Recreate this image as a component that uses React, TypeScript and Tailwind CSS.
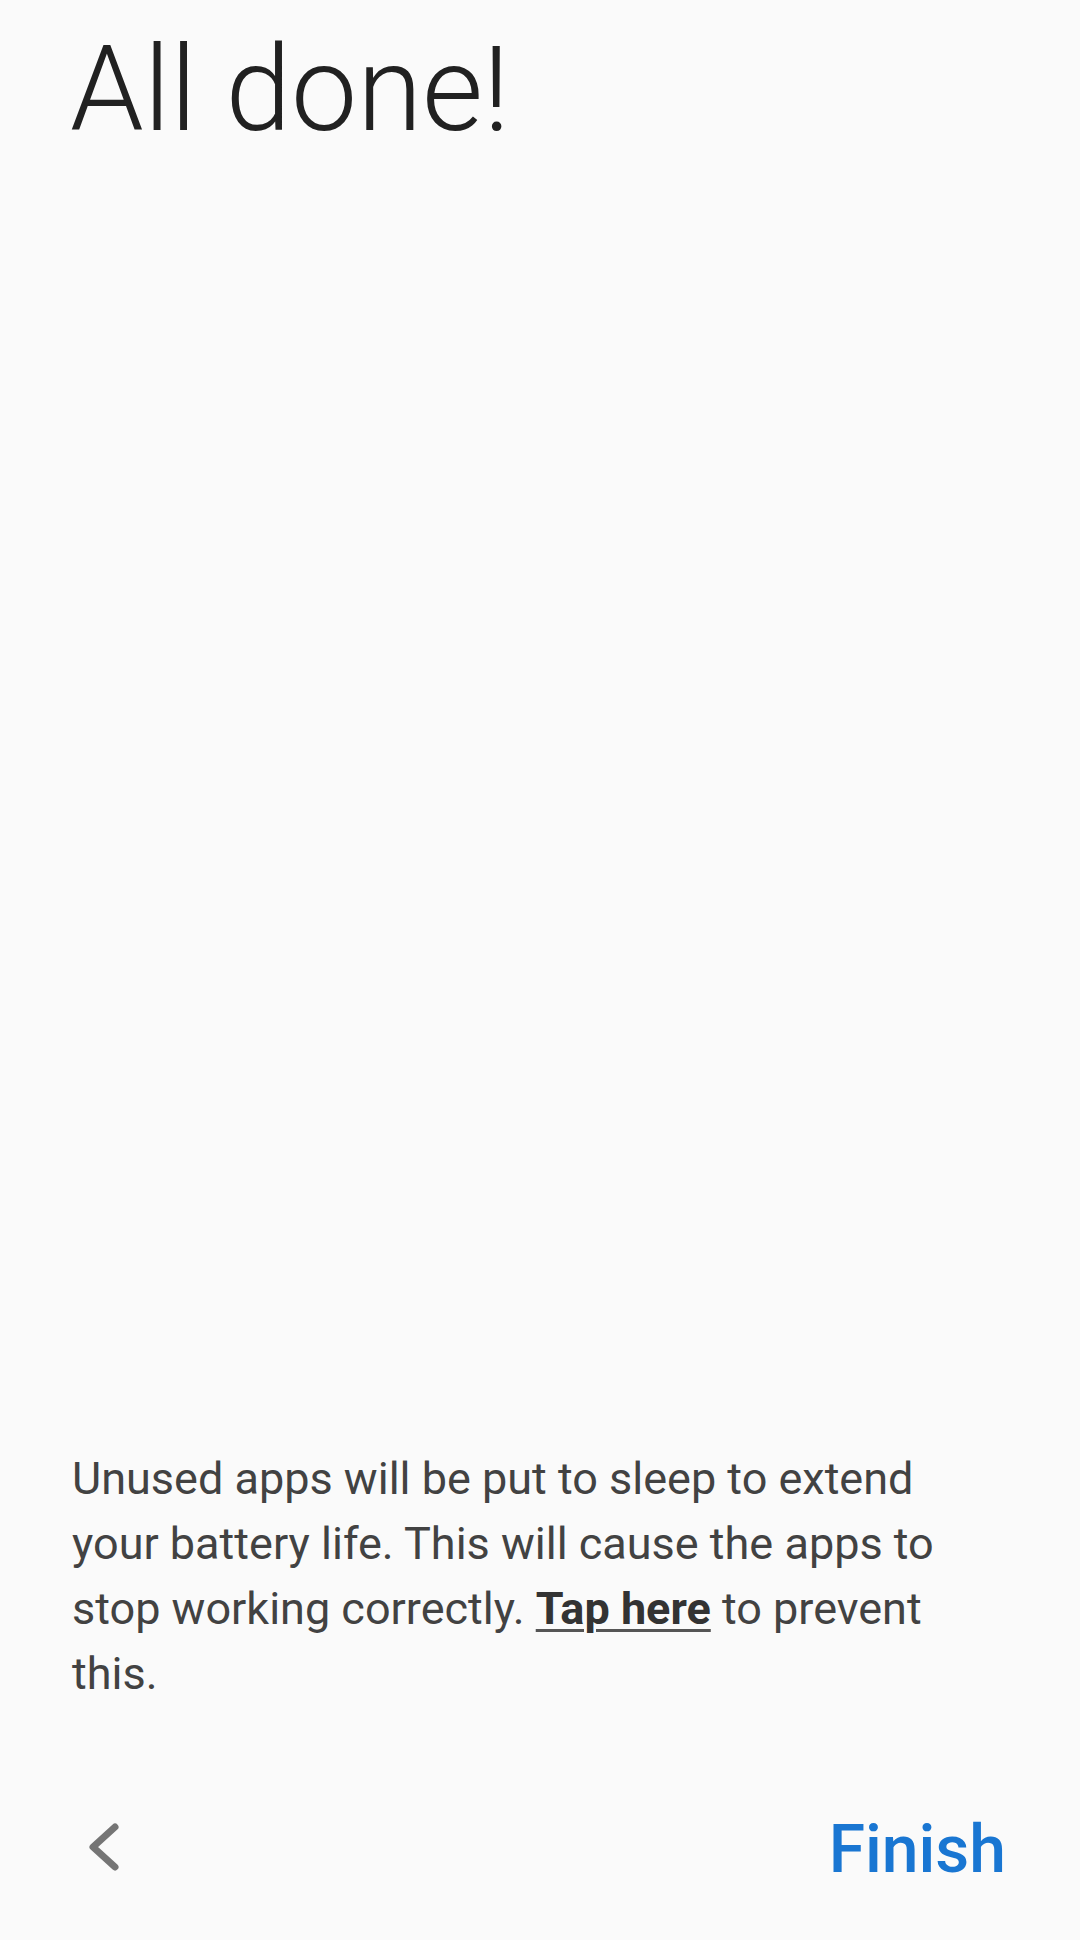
export default function App() {
  return (
    <div
      className="flex h-[1940px] w-[1080px] flex-col bg-[#fafafa]"
      style={{ fontFamily: 'Roboto, "Noto Sans", sans-serif' }}
    >
      <h1 className="pl-[70px] pt-[25px] text-[118px] font-light leading-[130px] text-[#212121]">
        All done!
      </h1>

      <div className="flex-1" />

      <p className="w-[972px] pl-[72px] text-[45px] leading-[65px] text-[#424242]">
        Unused apps will be put to sleep to extend your battery life. This will cause the apps to
        stop working correctly.{' '}
        <span className="font-bold text-[#333333] underline decoration-[#555555] decoration-[2.5px] underline-offset-[5px]">
          Tap here
        </span>{' '}
        to prevent this.
      </p>

      <div className="flex items-center justify-between pb-[57px] pl-[84px] pr-[74px] pt-[111px]">
        <button className="flex h-[66px] w-[40px] items-start">
          <svg width="40" height="66" viewBox="0 0 40 66" fill="none">
            <path
              d="M31 10 L9 30 L31 50"
              stroke="#757575"
              strokeWidth="7"
              strokeLinecap="round"
              strokeLinejoin="round"
            />
          </svg>
        </button>
        <button className="h-[66px] text-[66px] font-medium leading-none text-[#1976d2]">
          Finish
        </button>
      </div>
    </div>
  );
}
